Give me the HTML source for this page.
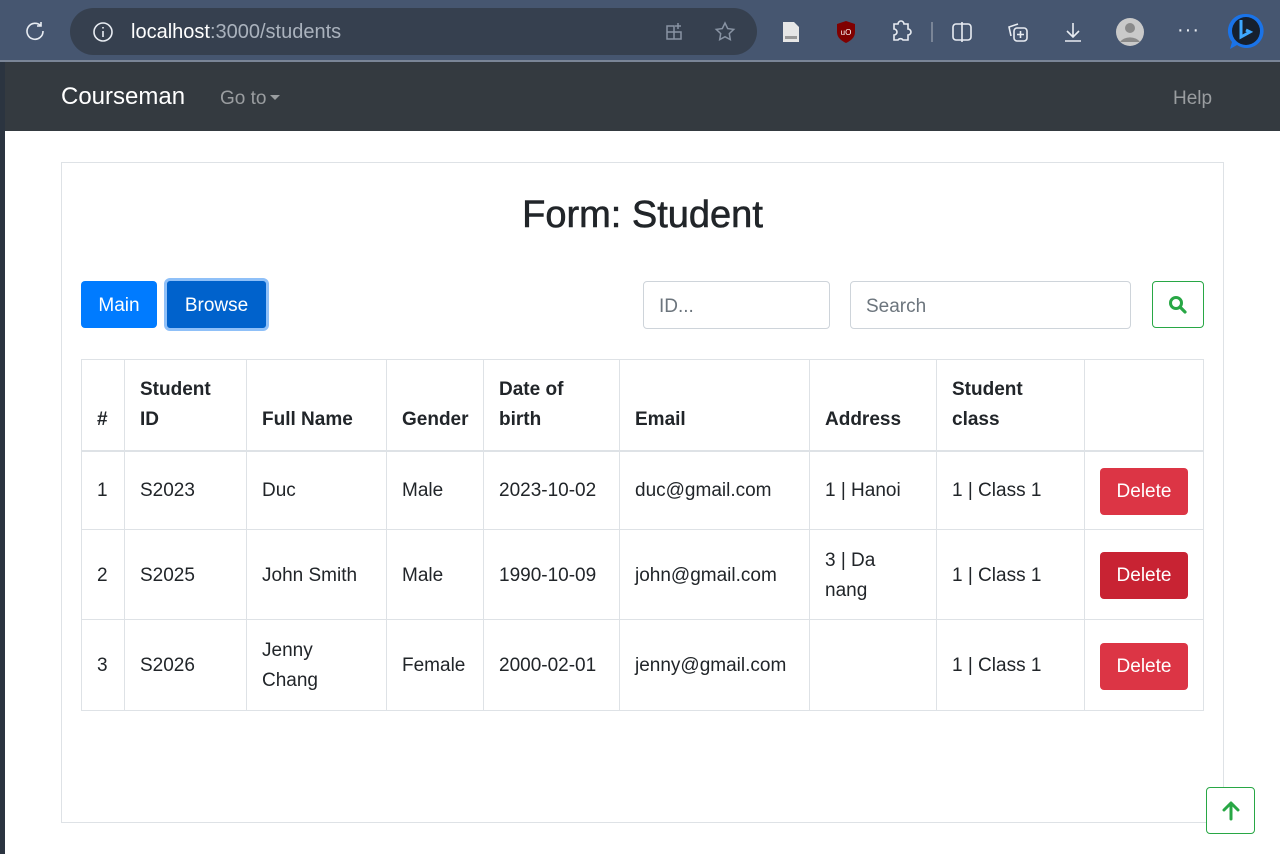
<!DOCTYPE html>
<html><head><meta charset="utf-8"><style>
*{box-sizing:border-box;margin:0;padding:0}
body{width:1280px;height:854px;overflow:hidden;background:#fff;font-family:"Liberation Sans",sans-serif;color:#212529;position:relative}
.abs{position:absolute}
#chrome{left:0;top:0;width:1280px;height:60px;background:#465670}
#chromeline{left:0;top:60px;width:1280px;height:2px;background:#7a8597}
#url{left:70px;top:8px;width:687px;height:47px;border-radius:24px;background:#36404f}
#nav{left:5px;top:62px;width:1275px;height:69px;background:#343a40}
#strip{left:0;top:62px;width:5px;height:792px;background:#2b3440}
.ic{stroke:#e8ecf2;fill:none;stroke-width:1.6}
#card{left:61px;top:162px;width:1163px;height:661px;border:1px solid #dee2e6}
.btn{position:absolute;border-radius:4px;font-size:19px;color:#fff;text-align:center}
.inp{position:absolute;border:1px solid #ced4da;border-radius:4px;height:48px;font-size:19px;color:#6c757d;padding:14px 15px 0}
table{position:absolute;left:81px;top:359px;border-collapse:collapse;font-size:19px;table-layout:fixed;width:1122px}
td,th{border:1px solid #dee2e6;padding:2px 15px 0;vertical-align:middle;text-align:left;line-height:30px}
th{font-weight:bold;vertical-align:bottom;padding-bottom:15px;border-bottom:2px solid #dee2e6}
.del{display:inline-block;background:#dc3545;color:#fff;border-radius:4px;width:88px;height:47px;line-height:47px;text-align:center;font-size:19px}
</style></head><body>
<div id="chrome" class="abs"></div>
<div id="chromeline" class="abs"></div>
<svg class="abs" style="left:24px;top:20px" width="22" height="22" viewBox="0 0 22 22"><path class="ic" d="M17 6A8 8 0 1 0 19 11M17 2v4h-4"/></svg>
<div id="url" class="abs"></div>
<svg class="abs" style="left:92px;top:21px" width="22" height="22" viewBox="0 0 22 22"><circle class="ic" cx="11" cy="11" r="9"/><path class="ic" d="M11 10v6M11 6v1.5"/></svg>
<div class="abs" style="left:131px;top:21px;font-size:20px;color:#fff">localhost<span style="color:#aab2bd">:3000/students</span></div>
<svg class="abs" style="left:664px;top:21px" width="22" height="22" viewBox="0 0 22 22"><path d="M3 5h7v13H3zM3 11h14v7h-7M14 2v6M11 5h6" stroke="#8893a3" fill="none" stroke-width="1.5"/></svg>
<svg class="abs" style="left:713px;top:20px" width="24" height="24" viewBox="0 0 24 24"><path d="M12 3l2.7 5.6 6 .8-4.4 4.2 1 6-5.3-2.9-5.3 2.9 1-6L3.3 9.4l6-.8z" stroke="#8893a3" fill="none" stroke-width="1.5"/></svg>
<svg class="abs" style="left:781px;top:21px" width="20" height="22" viewBox="0 0 20 22"><path d="M2 1h11l5 5v15H2z" fill="#e6e6e6"/><rect x="4" y="15" width="12" height="3" fill="#999"/></svg>
<svg class="abs" style="left:836px;top:20px" width="20" height="24" viewBox="0 0 20 24"><path d="M10 1l9 3v8c0 6-5 9-9 11-4-2-9-5-9-11V4z" fill="#800000"/><text x="10" y="15" font-size="8" fill="#fff" text-anchor="middle" font-family="Liberation Sans">uO</text></svg>
<svg class="abs" style="left:889px;top:20px" width="24" height="24" viewBox="0 0 24 24"><path class="ic" d="M9 4a3 3 0 0 1 6 0h4v5a3 3 0 0 1 0 6v5h-5a3 3 0 0 0-5 0H5v-5a3 3 0 0 0 0-6V4z"/></svg>
<div class="abs" style="left:931px;top:22px;width:2px;height:20px;background:#7a8597"></div>
<svg class="abs" style="left:950px;top:20px" width="24" height="24" viewBox="0 0 24 24"><rect class="ic" x="3" y="4" width="18" height="16" rx="3"/><path class="ic" d="M12 2v20"/></svg>
<svg class="abs" style="left:1006px;top:20px" width="24" height="24" viewBox="0 0 24 24"><rect class="ic" x="8" y="8" width="13" height="13" rx="3"/><path class="ic" d="M5 16L3 7l9-3M14.5 11v7M11 14.5h7"/></svg>
<svg class="abs" style="left:1061px;top:20px" width="24" height="24" viewBox="0 0 24 24"><path class="ic" d="M12 3v14M6 11l6 6 6-6M4 21h16"/></svg>
<svg class="abs" style="left:1115px;top:17px" width="30" height="30" viewBox="0 0 30 30"><circle cx="15" cy="15" r="14" fill="#c9c9c9"/><circle cx="15" cy="11" r="5" fill="#8a8a8a"/><path d="M5 25a11 8 0 0 1 20 0z" fill="#8a8a8a"/></svg>
<div class="abs" style="left:1177px;top:19px;font-size:20px;color:#e8ecf2;letter-spacing:1px">···</div>
<svg class="abs" style="left:1226px;top:12px" width="40" height="40" viewBox="0 0 40 40"><path d="M20 2a17 17 0 1 1-9 31l-7 4 2-7A17 17 0 0 1 20 2z" fill="#1a73e8"/><circle cx="20" cy="19" r="14" fill="#16202e"/><path d="M15 8v17l9-5-4-2" stroke="#3ea8ff" stroke-width="3" fill="none"/></svg>

<div id="nav" class="abs"></div>
<div id="strip" class="abs"></div>
<div class="abs" style="left:61px;top:83px;font-size:24px;color:#fff">Courseman</div>
<div class="abs" style="left:220px;top:88px;font-size:19px;color:#9a9da0">Go to <span style="display:inline-block;width:0;height:0;border-left:5px solid transparent;border-right:5px solid transparent;border-top:5px solid #9a9da0;vertical-align:4px;margin-left:-2px"></span></div>
<div class="abs" style="left:1173px;top:88px;font-size:19px;color:#9a9da0">Help</div>

<div id="card" class="abs"></div>
<div class="abs" style="left:61px;top:194px;width:1163px;text-align:center;font-size:38px;font-weight:500;-webkit-text-stroke:0.6px #212529">Form: Student</div>
<div class="btn" style="left:81px;top:281px;width:76px;height:47px;line-height:49px;background:#007bff">Main</div>
<div class="btn" style="left:164px;top:278px;width:105px;height:53px;border:3px solid #8fc0f8;border-radius:6px;background:#0062cc;line-height:49px;">Browse</div>
<div class="inp" style="left:643px;top:281px;width:187px">ID...</div>
<div class="inp" style="left:850px;top:281px;width:281px">Search</div>
<div class="abs" style="left:1152px;top:281px;width:52px;height:47px;border:1px solid #28a745;border-radius:4px"></div>
<svg class="abs" style="left:1166px;top:293px" width="24" height="24" viewBox="0 0 24 24"><circle cx="10" cy="10" r="5.5" stroke="#28a745" stroke-width="3" fill="none"/><path d="M14 14l5 5" stroke="#28a745" stroke-width="3.2" stroke-linecap="round"/></svg>

<table>
<colgroup><col style="width:43px"><col style="width:122px"><col style="width:140px"><col style="width:97px"><col style="width:136px"><col style="width:190px"><col style="width:127px"><col style="width:148px"><col style="width:119px"></colgroup>
<tr style="height:91px"><th style="padding-right:0">#</th><th>Student<br>ID</th><th>Full Name</th><th>Gender</th><th>Date of<br>birth</th><th>Email</th><th>Address</th><th>Student<br>class</th><th></th></tr>
<tr style="height:79px"><td>1</td><td>S2023</td><td>Duc</td><td>Male</td><td>2023-10-02</td><td>duc@gmail.com</td><td>1 | Hanoi</td><td>1 | Class 1</td><td><span class="del">Delete</span></td></tr>
<tr style="height:90px"><td>2</td><td>S2025</td><td>John Smith</td><td>Male</td><td>1990-10-09</td><td>john@gmail.com</td><td>3 | Da<br>nang</td><td>1 | Class 1</td><td><span class="del" style="background:#c82333">Delete</span></td></tr>
<tr style="height:91px"><td>3</td><td>S2026</td><td>Jenny<br>Chang</td><td>Female</td><td>2000-02-01</td><td>jenny@gmail.com</td><td></td><td>1 | Class 1</td><td><span class="del">Delete</span></td></tr>
</table>

<div class="abs" style="left:1206px;top:787px;width:49px;height:47px;border:1px solid #28a745;border-radius:4px;background:#fff"></div>
<svg class="abs" style="left:1219px;top:799px" width="24" height="24" viewBox="0 0 24 24"><path d="M12 20V5M5 11l7-7 7 7" stroke="#28a745" stroke-width="3" fill="none" stroke-linecap="round" stroke-linejoin="round"/></svg>
</body></html>
